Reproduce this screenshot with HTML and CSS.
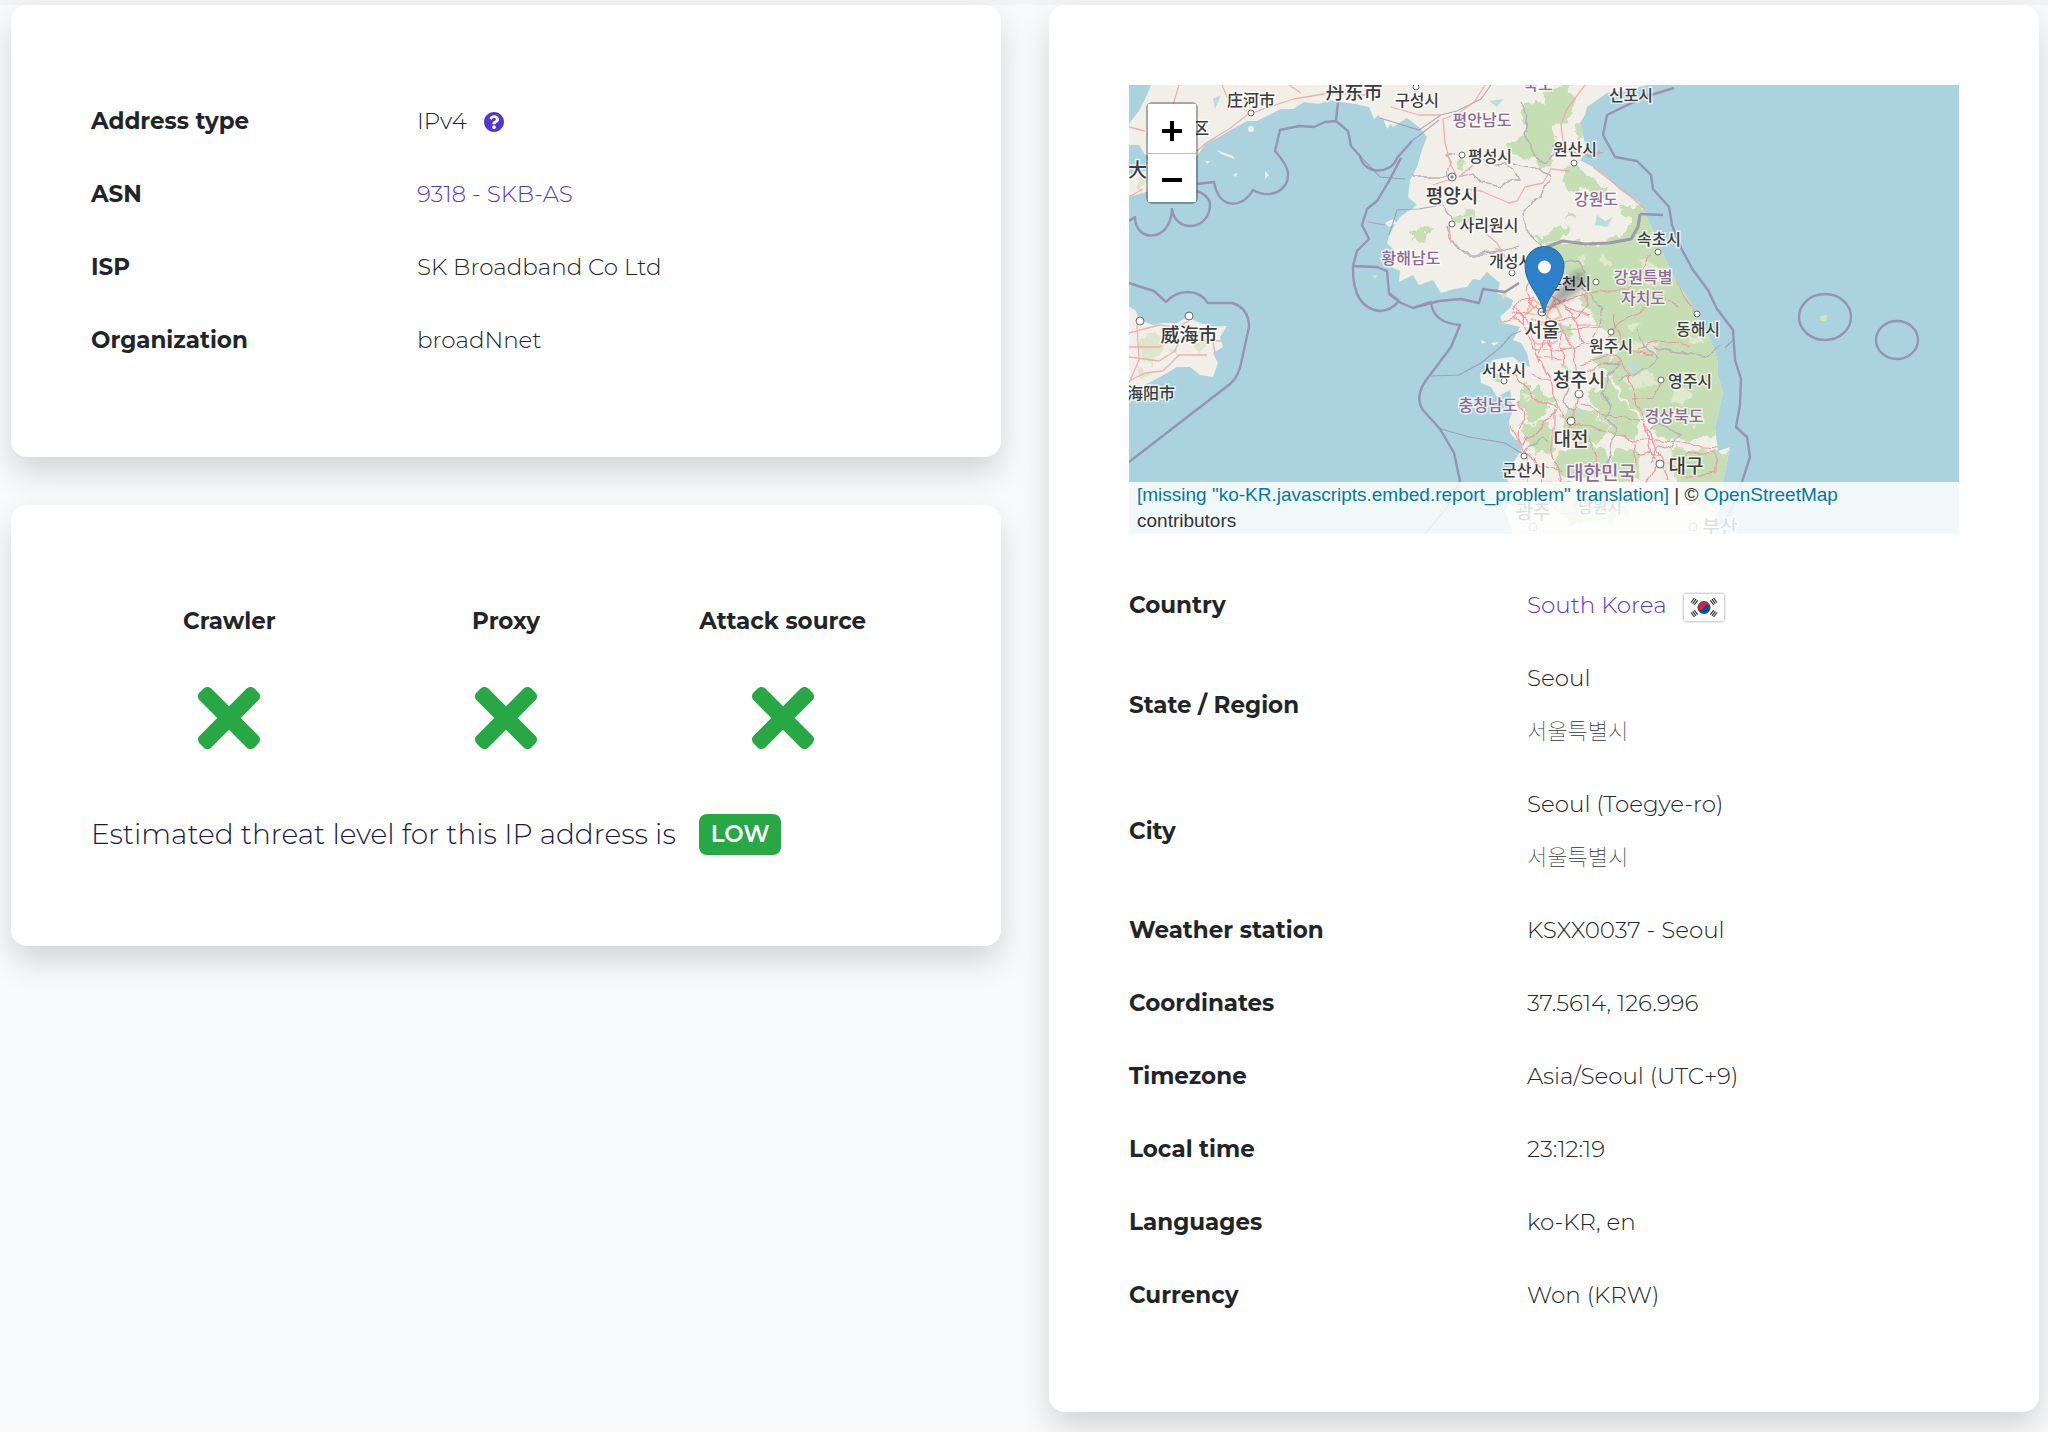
FILE: index.html
```html
<!DOCTYPE html>
<html lang="en">
<head>
<meta charset="utf-8">
<meta name="viewport" content="width=device-width, initial-scale=1">
<title>IP address details</title>
<link rel="stylesheet" href="styles.css">
</head>
<body>
<svg class="sprite" aria-hidden="true">
  <symbol id="times" viewBox="0 80 352 352"><path d="M242.72 256l100.07-100.07c12.28-12.28 12.28-32.19 0-44.48l-22.24-22.24c-12.28-12.28-32.19-12.28-44.48 0L176 189.28 75.93 89.21c-12.28-12.28-32.19-12.28-44.48 0L9.21 111.45c-12.28 12.28-12.28 32.19 0 44.48L109.28 256 9.21 356.07c-12.28 12.28-12.28 32.19 0 44.48l22.24 22.24c12.28 12.28 32.2 12.28 44.48 0L176 322.72l100.07 100.07c12.28 12.28 32.2 12.28 44.48 0l22.24-22.24c12.28-12.28 12.28-32.19 0-44.48L242.72 256z"/></symbol>
</svg>
<main class="page">
  <div class="column">
    <section class="card">
      <table class="facts facts-network">
        <tr><th scope="row">Address type</th><td><span class="with-icon">IPv4 <a class="help" href="#address-type" aria-label="About address types"><svg viewBox="8 8 496 496"><path d="M504 256c0 136.997-111.043 248-248 248S8 392.997 8 256C8 119.083 119.043 8 256 8s248 111.083 248 248zM262.655 90c-54.497 0-89.255 22.957-116.549 63.758-3.536 5.286-2.353 12.415 2.715 16.258l34.699 26.31c5.205 3.947 12.621 3.008 16.665-2.122 17.864-22.658 30.113-35.797 57.303-35.797 20.429 0 45.698 13.148 45.698 32.958 0 14.976-12.363 22.667-32.534 33.976C247.128 238.528 216 254.941 216 296v4c0 6.627 5.373 12 12 12h56c6.627 0 12-5.373 12-12v-1.333c0-28.462 83.186-29.647 83.186-106.667 0-58.002-60.165-102-116.531-102zM256 338c-25.365 0-46 20.635-46 46 0 25.364 20.635 46 46 46s46-20.636 46-46c0-25.365-20.635-46-46-46z"/></svg></a></span></td></tr>
        <tr><th scope="row">ASN</th><td><a href="#asn">9318 - SKB-AS</a></td></tr>
        <tr><th scope="row">ISP</th><td>SK Broadband Co Ltd</td></tr>
        <tr><th scope="row">Organization</th><td>broadNnet</td></tr>
      </table>
    </section>
    <section class="card">
      <table class="threats">
        <thead><tr><th scope="col">Crawler</th><th scope="col">Proxy</th><th scope="col">Attack source</th></tr></thead>
        <tbody><tr>
          <td><svg class="cross" role="img" aria-label="No"><use href="#times"/></svg></td>
          <td><svg class="cross" role="img" aria-label="No"><use href="#times"/></svg></td>
          <td><svg class="cross" role="img" aria-label="No"><use href="#times"/></svg></td>
        </tr></tbody>
      </table>
      <p class="level">Estimated threat level for this IP address is <span class="badge">LOW</span></p>
    </section>
  </div>
  <section class="card">
    <div class="map">
      <svg class="map-canvas" viewBox="0 0 830 449" preserveAspectRatio="xMidYMid slice">
        <defs>
          <clipPath id="landclip"><path id="land" d="M240,0 L251,33 L258,35 L264,42 L278,33 L291,43 L298,52 L293,65 L288,82 L281,95 L279,112 L288,120 L271,132 L261,148 L258,158 L266,166 L262,182 L271,186 L270,197 L284,190 L290,200 L304,195 L312,208 L325,204 L338,202 L344,194 L351,195 L358,187 L371,198 L368,208 L384,215 L382,222 L371,232 L374,238 L391,242 L384,255 L392,258 L398,268 L401,282 L391,278 L384,272 L374,273 L364,275 L358,284 L351,289 L352,298 L362,302 L368,312 L381,305 L384,325 L380,336 L381,348 L388,356 L394,362 L384,378 L378,395 L386,410 L376,425 L384,449 L580,449 L592,420 L594,397 L601,362 L589,366 L586,342 L594,308 L589,290 L588,272 L581,255 L571,235 L560,215 L551,202 L538,178 L530,160 L524,145 L511,118 L491,105 L478,92 L464,82 L451,75 L458,66 L454,50 L451,38 L456,30 L458,22 L478,8 L495,6 L518,0 Z"/></clipPath>
          <linearGradient id="pin" x1="0" y1="0" x2="0" y2="1"><stop offset="0" stop-color="#2e7fc6"/><stop offset="1" stop-color="#2b83cb"/></linearGradient>
          <filter id="soft"><feGaussianBlur stdDeviation="3"/></filter>
          <filter id="rough" x="0" y="0" width="830" height="449" filterUnits="userSpaceOnUse"><feTurbulence type="fractalNoise" baseFrequency=".09" numOctaves="3" seed="4"/><feDisplacementMap in="SourceGraphic" scale="16" xChannelSelector="R" yChannelSelector="G"/></filter>
          <filter id="wiggle" x="0" y="0" width="830" height="449" filterUnits="userSpaceOnUse"><feTurbulence type="fractalNoise" baseFrequency=".06" numOctaves="2" seed="9"/><feDisplacementMap in="SourceGraphic" scale="10" xChannelSelector="R" yChannelSelector="G"/></filter>
        </defs>
        <rect width="830" height="449" fill="#aad3df"/>
        <g fill="#f2efe9">
          <use href="#land"/>
          <path d="M22,0 L18,10 L10,26 L2,36 L0,40 L0,60 L10,60 L16,70 L30,70 L24,84 L0,90 L0,112 L20,106 L55,100 L60,80 L70,68 L77,58 L88,53 L100,46 L118,36 L128,36 L140,30 L152,24 L164,24 L175,17 L190,19 L200,15 L212,17 L226,19 L240,22 L245,34 L252,28 L258,44 L268,30 L262,0 Z"/>
          <path d="M0,222 L6,225 L11,235 L24,240 L34,238 L48,238 L58,232 L71,238 L84,242 L98,241 L91,252 L94,262 L84,268 L89,278 L84,292 L71,290 L61,282 L48,282 L31,292 L11,302 L0,305 Z"/>
        </g>
        <g clip-path="url(#landclip)"><g fill="#c5deb3" filter="url(#rough)">
          <path d="M404,14 L416,18 L420,4 L440,0 L446,14 L438,36 L424,44 L426,66 L420,86 L404,76 L384,70 L380,62 L394,50 L398,40 L392,28Z"/>
          <path d="M434,84 L448,82 L462,90 L476,104 L474,112 L450,102 L440,108Z M454,32 L458,44 L452,54 L446,50Z M440,124 L446,130 L440,136Z M330,72 L338,76 L336,86 L328,84Z"/>
          <path d="M284,146 L300,140 L304,144 L294,154 L284,158Z M404,154 L424,146 L440,138 L432,156 L412,160Z M322,130 L344,128 L348,136 L330,140Z"/>
          <path d="M418,160 L450,158 L486,156 L504,134 L490,124 L512,118 L530,150 L556,190 L590,240 L600,280 L600,340 L580,352 L550,356 L530,350 L520,336 L500,322 L486,296 L476,286 L490,262 L466,236 L450,214 L462,204 L440,196 L424,180Z"/>
          <path d="M392,300 L412,300 L424,316 L410,336 L392,334Z M388,340 L420,336 L424,368 L402,366Z M432,330 L446,320 L470,332 L482,346 L470,360 L440,356Z M460,310 L478,290 L492,314 L510,334 L506,356 L488,352 L470,330Z M430,366 L456,358 L484,370 L482,392 L426,390Z M486,362 L506,364 L512,396 L484,394Z M542,364 L604,366 L600,420 L550,410Z M372,285 L362,292 L372,298Z M430,236 L442,240 L440,252 L430,250Z M420,395 L470,400 L500,430 L440,440Z M430,280 L444,284 L440,298Z M462,272 L480,270 L482,284 L470,286Z"/>
        </g>
        <g fill="#e6ecd5" filter="url(#rough)" opacity=".8"><path d="M512,176 L530,180 L536,194 L518,200Z M500,256 L530,258 L526,266 L506,266Z M548,300 L562,306 L556,320 L542,316Z M496,290 L524,288 L528,300 L500,304Z M470,172 L484,176 L480,186Z M560,330 L572,334 L566,344Z M560,250 L574,256 L562,262Z M450,170 L460,174 L452,180Z M530,376 L546,372 L556,384 L538,390Z M396,306 L404,310 L398,318Z M494,240 L508,238 L504,248Z"/></g></g>
        <g fill="#d6e5c5" opacity=".8" filter="url(#rough)"><path d="M12,252 L32,250 L36,262 L24,280 L12,274Z M56,250 L72,248 L78,256 L66,264Z M40,262 L52,264 L46,272Z M4,96 L14,94 L14,106Z M8,284 L24,284 L12,294Z"/></g>
        <g fill="#b9dbe2"><path d="M360,16 L374,14 L368,22Z M468,130 L476,136 L484,132 L478,142 L466,140Z M500,280 L510,276 L508,290Z M84,14 L92,10 L86,24Z M450,322 L456,332 L450,330Z"/></g>
        <g fill="#f2efe9"><circle cx="122" cy="44" r="3"/><path d="M88,65 L104,71 L106,74 L92,69Z M136,86 l4,4 -4,4z M76,76 l5,0 -3,3z M256,138 l8,-4 4,4 -8,4z M104,90 l4,-2 -1,4z M352,255 l5,2 -4,2z M362,258 l8,-1 -5,4z"/><path fill="#d5e6b5" d="M691,231 l7,-1 -1,6 -5,0z M243,190 l6,0 -3,4z M372,205 l6,4 -4,6z"/></g>
        <g fill="none" stroke="#b8aebb" stroke-width="1.3" filter="url(#wiggle)">
          <path d="M392,16 L398,30 L394,50 L404,60 L404,70 L418,78 L424,66 M281,92 L302,92 L318,92 L322,78 L316,70 L326,68 M330,92 L344,88 L352,98 L372,102 L378,96 L390,96 L384,84 L372,78 L360,80 L350,72 L340,84 M384,78 L410,84 L420,92 L412,112 L400,122 L392,130 L394,142 L404,152 L414,162"/>
          <path d="M318,142 L322,156 L336,168 L350,168 L372,166 L390,160 M424,66 L424,60 L436,58 L440,68 L460,70 L475,66 M324,134 L314,120 M430,180 L450,176 L456,190 M454,200 L462,214 L474,222 L470,240 L464,252 M476,280 L490,278 L480,292 L474,310 L482,318 L478,334 L490,344 L482,360 L478,380 L486,392 M506,246 L516,262 L530,274 L520,282 L500,292 L492,296 M524,262 L546,268 L562,268 L576,272 L592,262 M430,294 L440,300 L434,318 L446,328 M530,340 L552,350 L544,364 L530,360 L520,376 M396,366 L414,352 L420,358"/>
        </g>
        <g fill="none" stroke="#988bad" stroke-width="1.2" opacity=".7">
          <path d="M251,33 L290,45 L312,30 L328,26 L352,14 L362,0 M230,70 L251,92 L276,94 M239,137 L256,140 M260,150 L268,125 L290,124 L312,120 M283,56 L310,35"/>
          <path d="M302,291 L330,290 L352,278 L372,262 L382,250 L392,246 M312,344 L340,352 L376,358 L392,368 M596,263 L604,255"/>
        </g>
        <g fill="none" stroke="#f5a6a6" stroke-width="1.3" stroke-linejoin="round" opacity=".9">
          <path d="M68,66 L77,58 L100,44 L118,30 L140,22 L165,14 L200,8 L240,10 M0,42 L16,46 M50,0 L44,20 M93,0 L98,12 L118,26 M160,0 L172,8 M0,112 L14,104"/>
          <path d="M262,22 L290,30 L312,30 M356,0 L346,16 L330,28 L314,34 L316,58 L322,80 L328,92 M330,92 L344,80 M328,92 L304,100 M338,104 L352,106 L366,112 L380,118 L388,116 L396,102 L414,98 L422,84 L440,86 M456,0 L438,24 L432,40 L434,56 M464,82 L490,102 L516,124 M320,140 L322,158 M356,148 L368,158 L376,172"/>
          <path d="M0,248 L30,240 L48,242 L60,236 M0,262 L30,262 L50,254 L92,256 M8,240 L10,275 L0,298 M50,270 L78,270 M0,272 L30,276 L46,266 L51,254 M84,256 L86,268 M0,296 L16,288 L34,286 L50,270"/>
        </g>
        <g clip-path="url(#landclip)"><g fill="none" stroke="#f393a0" stroke-width="1.2" stroke-linejoin="round" filter="url(#wiggle)">
          <path d="M374,236 L400,228 L414,228 L440,212 L470,206 L500,206 L530,206 L550,222 M414,228 L400,216 L396,206 L400,196 M414,228 L430,240 L444,262 L448,290 L450,310 L446,330 L438,344 M402,242 L408,270 L424,300 L426,322 L444,340 M418,232 L414,260 L408,276 M388,222 L396,240 L404,262 L430,266 L462,258 L484,248 L492,236 L520,220 M384,228 L420,246 L472,242 M434,222 L446,236 L454,260 M424,212 L442,226 L462,232 M454,206 L458,220 L448,232 L428,236"/>
          <path d="M374,290 L388,292 L404,310 L428,326 L412,340 L398,354 L392,368 M404,290 L428,298 L448,292 L472,280 L492,276 L504,304 L512,330 L522,350 L534,380 L540,396 M452,318 L478,330 L514,336 M444,336 L462,344 L486,348 L504,356 L528,354 L560,360 L592,362 M504,314 L524,312 L532,296 M492,276 L484,270 L452,280 M500,206 L510,190 L520,172 M382,340 L396,366 L412,380 L434,388 M504,358 L506,380 M536,380 L560,368 L586,366 L586,386 L560,392 L540,380 M424,326 L424,370 L434,400 M516,340 L526,380 L518,398 M484,228 L488,246 L500,262 L522,270 M540,178 L552,206 L560,220 L572,232 M510,264 L530,256 L548,258 L560,262"/>
          <path d="M389,315 L396,328 L390,350 L398,372 L398,400 M459,352 L468,376 L464,396 M406,372 L414,398 M500,396 L540,424 L580,412 M400,410 L440,430 L500,410 M406,256 L430,256 M410,272 L432,274 M420,246 L422,276 M432,246 L434,280 M448,240 L468,240 M414,240 L420,260 M384,232 L396,240 M386,226 L392,216 L404,212 M518,346 L530,342 M508,370 L522,366 L530,372"/>
        </g></g>
        <g fill="none" stroke="#f79d76" stroke-width="2" opacity=".6"><path d="M398,226 L404,214 L414,222 L428,222 L432,232 L416,238 L402,234 M408,220 L396,230 M418,230 L426,214"/></g>
        <g fill="none" stroke="#988bad" stroke-width="2.4" stroke-linejoin="round" opacity=".9">
          <path d="M68,99 L85,97 C90,126 114,123 124,105 C142,115 160,105 159,88 C158,78 149,70 146,66 L151,45 L170,41 L185,42 L196,37 L207,36 L209,17 M207,36 L219,46 L222,61 L231,71 C235,90 262,90 268,73 L283,56"/>
          <path d="M0,136 L6,132 C6,158 42,158 43,124 C46,149 82,146 81,118 Q79,110 68,106 M0,198 L12,202 L25,206 L37,217 C50,203 70,204 79,218 L103,218 Q120,223 120,242 L113,274 Q110,292 101,299 L0,377"/>
          <path d="M272,73 L260,96 L248,116 L238,124 L233,140 L240,154 L228,166 L224,181 L248,182 L258,186 L260,208 L270,216 M224,181 Q223,222 250,226 Q262,226 270,216 M260,209 L272,218 L284,223 L310,216 L332,214 L350,218 L354,204 L376,207 L390,198 M284,223 L302,217 Q304,238 331,240 L322,262 L301,290 Q284,310 294,325 L311,344 L325,368 L331,396 L320,420 L296,449"/>
          <path d="M545,3 L515,12 L478,30 L474,50 L486,72 L508,76 L522,90 L524,104 L540,122 L543,140 L552,163 L564,185 L579,205 L588,224 L604,245 L606,275 L612,294 L611,320 L607,342 L618,352 L621,372 L612,400 L600,430 L580,449 M511,129 L534,130"/>
          <path stroke-width="3" stroke="#9c93a8" d="M418,162 L434,156 L456,159 L480,158 L502,154 L509,142 L511,129"/>
          <ellipse cx="696" cy="232" rx="26" ry="23"/><ellipse cx="768" cy="255" rx="21" ry="19"/>
        </g>
        <g class="place-dots">
          <circle cx="122" cy="28" r="3"/><circle cx="333" cy="70" r="3"/><circle cx="445" cy="78" r="3"/><circle cx="323" cy="139" r="3"/><circle cx="383" cy="188" r="3"/><circle cx="467" cy="197" r="3"/><circle cx="529" cy="167" r="3"/><circle cx="568" cy="229" r="3"/><circle cx="482" cy="247" r="3"/><circle cx="532" cy="295" r="3"/><circle cx="375" cy="296" r="3"/><circle cx="395" cy="371" r="3"/><circle cx="287" cy="2" r="3"/>
          <circle cx="450" cy="309" r="4"/><circle cx="442" cy="336" r="4"/><circle cx="531" cy="379" r="4"/><circle cx="11" cy="236" r="4"/><circle cx="60" cy="231" r="4"/><circle cx="404" cy="442" r="4"/><circle cx="564" cy="442" r="4"/><circle cx="323" cy="92" r="4"/><circle cx="413" cy="227" r="4"/>
          <path d="M321,92 h4 M323,90 v4 M411,227 h4"/>
        </g>
        <g class="labels">
          <text x="122" y="21">庄河市</text><text x="72" y="49">区</text><text x="-1" y="92" class="from-edge">大连市</text><text x="225" y="14" class="city">丹东市</text>
          <text x="288" y="21">구성시</text><text x="502" y="16">신포시</text><text x="446" y="70">원산시</text><text x="361" y="77">평성시</text><text x="323" y="118" class="city">평양시</text><text x="360" y="146">사리원시</text><text x="382" y="182">개성시</text><text x="440" y="204">춘천시</text><text x="530" y="160">속초시</text><text x="569" y="250">동해시</text><text x="482" y="267">원주시</text><text x="375" y="291">서산시</text><text x="561" y="302">영주시</text><text x="395" y="391">군산시</text>
          <text x="60" y="257" class="city">威海市</text><text x="22" y="314">海阳市</text><text x="413" y="252" class="city">서울</text><text x="450" y="302" class="city">청주시</text><text x="442" y="361" class="city">대전</text><text x="557" y="388" class="city">대구</text><text x="404" y="434" class="city">광주</text><text x="471" y="428">남원시</text><text x="591" y="449" class="city">부산</text><text x="409" y="5" class="region">북도</text>
          <g class="region"><text x="353" y="41">평안남도</text><text x="467" y="120">강원도</text><text x="282" y="179">황해남도</text><text x="514" y="198">강원특별</text><text x="514" y="219">자치도</text><text x="359" y="326">충청남도</text><text x="545" y="337">경상북도</text><text x="472" y="395" class="city">대한민국</text></g>
        </g>
        <path d="M414,228 L424,212 Q438,188 452,186 Q462,196 448,208Z" fill="#000" opacity=".3" filter="url(#soft)"/>
        <path d="M415,228 C412,210 396,200 396,181 A19.5,19.5 0 0 1 435,181 C435,200 418,210 415,228Z" fill="url(#pin)" stroke="#2468a8" stroke-width="1"/>
        <circle cx="415.500" cy="182" r="6.500" fill="#fff"/>
      </svg>
      <div class="zoom">
        <button type="button" aria-label="Zoom in"><svg viewBox="0 0 20 20"><path d="M0 10h20M10 0v20"/></svg></button>
        <button type="button" aria-label="Zoom out"><svg viewBox="0 0 20 20"><path d="M0 10h20"/></svg></button>
      </div>
      <div class="attribution"><a href="#report">[missing "ko-KR.javascripts.embed.report_problem" translation]</a> | © <a href="#osm">OpenStreetMap</a> contributors</div>
    </div>
    <table class="facts facts-location">
      <tr><th scope="row">Country</th><td><span class="with-icon"><a href="#kr">South Korea</a>
        <svg class="flag" viewBox="0 0 40 27" role="img" aria-label="Flag of South Korea"><rect width="40" height="27" fill="#fff"/><circle cx="20" cy="13.500" r="6.500" fill="#0f4c9c"/><path d="M14.600 10 A6.500 6.500 0 0 1 25.400 17 A3.250 3.250 0 0 0 20 13.500 A3.250 3.250 0 0 1 14.600 10Z" fill="#d5203a" transform="rotate(-30 20 13.500)"/><g stroke="#333" stroke-width="1.200"><path d="M7 8.500l3.400-4.500M8.600 9.700l3.400-4.500M10.200 10.900l3.400-4.500M33 8.500l-3.400-4.500M31.400 9.700l-3.400-4.500M29.800 10.900l-3.400-4.500M7 18.500l3.400 4.500M8.600 17.300l3.400 4.500M10.200 16.100l3.400 4.500M33 18.500l-3.400 4.500M31.400 17.300l-3.400 4.500M29.800 16.100l-3.400 4.500"/></g></svg></span></td></tr>
      <tr><th scope="row">State / Region</th><td>Seoul<div class="local" lang="ko">서울특별시</div></td></tr>
      <tr><th scope="row">City</th><td>Seoul (Toegye-ro)<div class="local" lang="ko">서울특별시</div></td></tr>
      <tr><th scope="row">Weather station</th><td>KSXX0037 - Seoul</td></tr>
      <tr><th scope="row">Coordinates</th><td>37.5614, 126.996</td></tr>
      <tr><th scope="row">Timezone</th><td>Asia/Seoul (UTC+9)</td></tr>
      <tr><th scope="row">Local time</th><td>23:12:19</td></tr>
      <tr><th scope="row">Languages</th><td>ko-KR, en</td></tr>
      <tr><th scope="row">Currency</th><td>Won (KRW)</td></tr>
    </table>
  </section>
</main>
</body>
</html>
```
FILE: styles.css
```css
* { box-sizing: border-box; }
body {
  margin: 0;
  min-height: 100vh;
  background: #f8fafc;
  color: #212529;
  font: 300 23px/33px Montserrat, Inter, sans-serif;
}
a { color: #5138d2; text-decoration: none; }
.sprite { display: none; }
.page {
  display: grid;
  grid-template-columns: repeat(2, minmax(0, 1fr));
  gap: 48px;
  align-items: start;
  padding: 5px 9px 19px 11px;
  background: linear-gradient(#f3f3f3 5px, transparent 5px);
}
.column { display: grid; gap: 48px; }
.card {
  padding: 80px;
  border-radius: 16px;
  background: #fff;
  box-shadow: 0 16px 32px rgba(0, 0, 0, .15);
}
table { width: 100%; border-collapse: collapse; table-layout: fixed; }
th { font-weight: 700; }
.facts th, .facts td { padding: 20px 0; text-align: left; vertical-align: middle; }
.facts-network th { width: 326px; }
.facts-location th { width: 398px; }
.with-icon { display: flex; align-items: center; gap: 17px; }
.help { display: flex; }
.help svg { width: 20px; height: 20px; fill: currentColor; }
.flag { width: 40px; height: 27px; margin-top: 2px; margin-bottom: -2px; border-radius: 2px; box-shadow: 0 0 3px rgba(0, 0, 0, .5); }
.local {
  margin-top: 18px;
  margin-bottom: 2px;
  color: #333;
  font: 100 22px/33px "Noto Sans CJK KR", sans-serif;
}
.threats th { padding: 20px 0; }
.threats td { height: 120px; padding: 0; text-align: center; }
.cross { display: block; width: 62px; height: 62px; margin: 0 auto; fill: #28a745; }
.level {
  display: flex;
  align-items: center;
  gap: 23px;
  height: 64px;
  margin: 24px 0 0;
  color: #1b1642;
  font-size: 28px;
  white-space: nowrap;
}
.badge {
  padding: 4px 12px;
  border-radius: 8px;
  background: #28a745;
  color: #fff;
  font-size: 23px;
  font-weight: 600;
}
.map { position: relative; height: 449px; margin-bottom: 35px; overflow: hidden; }
.map-canvas { display: block; width: 100%; height: 100%; }
.labels {
  fill: #3c3c3c;
  stroke: rgba(255, 255, 255, .7);
  stroke-width: 3px;
  paint-order: stroke;
  text-anchor: middle;
  font: 500 16px "Noto Sans CJK KR", sans-serif;
}
.labels .city { font-size: 19px; }
.labels .region { fill: #8d6a93; }
.labels .from-edge { font-size: 19px; text-anchor: start; }
.place-dots { fill: #fff; stroke: #6b6b6b; stroke-width: 1px; }
.zoom {
  position: absolute;
  top: 17px;
  left: 17px;
  border: 2px solid rgba(0, 0, 0, .3);
  border-radius: 6px;
  background-clip: padding-box;
}
.zoom button {
  display: flex;
  align-items: center;
  justify-content: center;
  width: 48px;
  height: 49px;
  padding: 4px 0 0;
  border: 0;
  background: #fff;
}
.zoom button + button { border-top: 1px solid #bbb; }
.zoom svg { width: 20px; height: 20px; fill: none; stroke: #000; stroke-width: 4px; }
.attribution {
  position: absolute;
  right: 0;
  bottom: 0;
  left: 0;
  padding: 0 40px 0 8px;
  background: rgba(255, 255, 255, .84);
  color: #333;
  font: 400 19px/26px "Liberation Sans", Arial, sans-serif;
}
.attribution a { color: #0078a8; }
```
